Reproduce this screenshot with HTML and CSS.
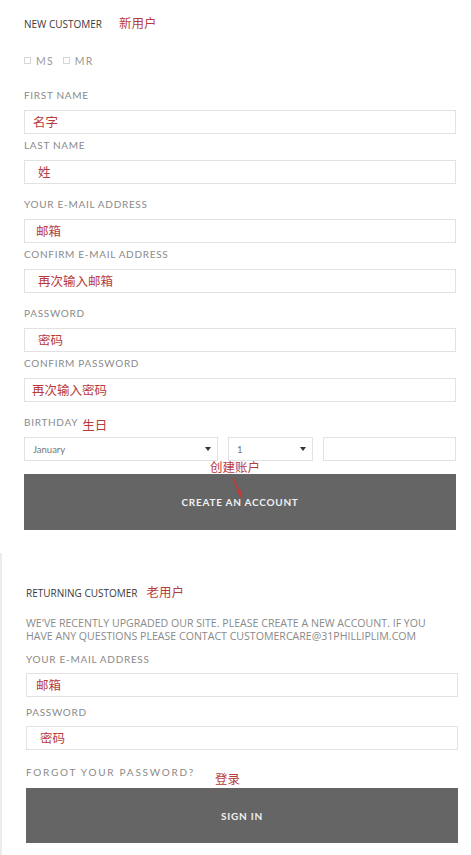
FILE: index.html
```html
<!DOCTYPE html>
<html lang="zh">
<head>
<meta charset="utf-8">
<title>Account</title>
<link rel="stylesheet" href="styles.css">
</head>
<body>
<section class="new">
  <h2 class="title">NEW CUSTOMER <span class="note">新用户</span></h2>
  <div class="gender">
    <span class="chk"><span class="box"></span>MS</span>
    <span class="chk"><span class="box"></span>MR</span>
  </div>

  <div class="group">
    <div class="field">
      <div class="lbl">FIRST NAME</div>
      <div class="input p8"><span class="note">名字</span></div>
    </div>
    <div class="field">
      <div class="lbl">LAST NAME</div>
      <div class="input p13"><span class="note">姓</span></div>
    </div>
  </div>

  <div class="group">
    <div class="field">
      <div class="lbl">YOUR E-MAIL ADDRESS</div>
      <div class="input p11"><span class="note">邮箱</span></div>
    </div>
    <div class="field">
      <div class="lbl">CONFIRM E-MAIL ADDRESS</div>
      <div class="input p13"><span class="note">再次输入邮箱</span></div>
    </div>
  </div>

  <div class="group">
    <div class="field">
      <div class="lbl">PASSWORD</div>
      <div class="input p13"><span class="note">密码</span></div>
    </div>
    <div class="field">
      <div class="lbl">CONFIRM PASSWORD</div>
      <div class="input p7"><span class="note">再次输入密码</span></div>
    </div>
  </div>

  <div class="group">
    <div class="lbl lbl-note">BIRTHDAY <span class="note low">生日</span></div>
    <div class="date-row">
      <div class="select">January<span class="caret"></span></div>
      <div class="select">1<span class="caret"></span></div>
      <div class="input"></div>
    </div>
  </div>

  <div class="btn-wrap">
    <span class="note callout create-note">创建账户</span>
    <svg class="arrow" width="30" height="30" viewBox="0 0 30 30" aria-hidden="true">
      <line x1="9" y1="3" x2="15" y2="17" stroke="#c23a3a" stroke-width="1.8"/>
      <polygon points="12.5,16.5 17.5,15 17,23" fill="#c23a3a"/>
    </svg>
    <button class="btn">CREATE AN ACCOUNT</button>
  </div>
</section>

<section class="returning">
  <h2 class="title gap-sm">RETURNING CUSTOMER <span class="note">老用户</span></h2>
  <p class="info">WE'VE RECENTLY UPGRADED OUR SITE. PLEASE CREATE A NEW ACCOUNT. IF YOU HAVE ANY QUESTIONS PLEASE CONTACT CUSTOMERCARE@31PHILLIPLIM.COM</p>
  <div class="field first">
    <div class="lbl">YOUR E-MAIL ADDRESS</div>
    <div class="input p9"><span class="note">邮箱</span></div>
  </div>
  <div class="field wide">
    <div class="lbl">PASSWORD</div>
    <div class="input p13"><span class="note">密码</span></div>
  </div>
  <div class="forgot">FORGOT YOUR PASSWORD?</div>
  <div class="btn-wrap signin-wrap">
    <span class="note callout login-note">登录</span>
    <button class="btn btn-sm">SIGN IN</button>
  </div>
</section>
</body>
</html>
```

FILE: styles.css
```css
html, body {
  margin: 0;
  padding: 0;
  background: #fff;
}

body {
  font-family: Lato, "Noto Sans CJK SC", sans-serif;
  color: #888;
}

.new {
  padding: 17px 15px 0 24px;
}

.title {
  margin: 0;
  display: flex;
  align-items: center;
  gap: 17px;
  font-family: "Open Sans", "Noto Sans CJK SC", sans-serif;
  font-weight: 400;
  font-size: 10px;
  line-height: 14px;
  height: 14px;
  color: #3a3a3a;
}

.title.gap-sm {
  gap: 9px;
}

.note {
  font-family: "Noto Sans CJK SC", sans-serif;
  font-size: 12.5px;
  line-height: 14px;
  color: #b83b3b;
  letter-spacing: 0;
}

.title .note {
  margin-top: -3px;
}

.gender {
  margin-top: 23px;
  display: flex;
  gap: 9px;
  height: 14px;
  font-size: 10.5px;
  line-height: 14px;
  letter-spacing: 1.2px;
  color: #999;
}

.chk {
  display: flex;
  align-items: center;
  gap: 5px;
}

.box {
  width: 7px;
  height: 7px;
  box-sizing: border-box;
  border: 1px solid #d6d6d6;
  margin-top: -2px;
}

.group {
  margin-top: 13px;
}

.gender + .group {
  margin-top: 20px;
}

.field + .field {
  margin-top: 4px;
}

.lbl {
  font-size: 10px;
  line-height: 14px;
  height: 14px;
  letter-spacing: 0.7px;
  color: #8a8a8a;
  margin-bottom: 8px;
}

.lbl-note {
  display: flex;
  align-items: center;
  gap: 4px;
}

.lbl-note .note {
  margin-top: 5px;
}

.input {
  height: 24px;
  box-sizing: border-box;
  border: 1px solid #e2e2e2;
  display: flex;
  align-items: center;
  padding-left: 8px;
}

.p7 { padding-left: 7px; }
.p8 { padding-left: 8px; }
.p9 { padding-left: 9px; }
.p11 { padding-left: 11px; }
.p13 { padding-left: 13px; }

.date-row {
  display: grid;
  grid-template-columns: 194px 85px 1fr;
  gap: 10px;
}

.select {
  height: 24px;
  box-sizing: border-box;
  border: 1px solid #e2e2e2;
  display: flex;
  align-items: center;
  padding: 0 6px 0 8px;
  font-size: 9.5px;
  color: #777;
}

.caret {
  margin-left: auto;
  width: 0;
  height: 0;
  border-left: 3px solid transparent;
  border-right: 3px solid transparent;
  border-top: 4px solid #333;
}

.btn-wrap {
  position: relative;
  margin-top: 13px;
}

.btn {
  display: block;
  width: 100%;
  height: 56px;
  border: 0;
  margin: 0;
  padding: 0;
  background: #656565;
  color: #f0f0f0;
  font-family: Lato, sans-serif;
  font-weight: 700;
  font-size: 10px;
  letter-spacing: 0.75px;
}

.btn-sm {
  height: 55px;
}

.callout {
  position: absolute;
  z-index: 2;
}

.create-note {
  left: 186px;
  top: -14px;
}

.arrow {
  position: absolute;
  left: 200px;
  top: 1px;
  z-index: 2;
}

.returning {
  margin-top: 23px;
  border-left: 2px solid #ececec;
  padding: 33px 13px 12px 24px;
}

.info {
  margin: 17px 0 0;
  max-width: 412px;
  font-family: "Open Sans", sans-serif;
  font-size: 10.6px;
  line-height: 13px;
  color: #8a8a8a;
}

.field.first {
  margin-top: 9px;
}

.returning .lbl {
  margin-bottom: 7px;
}

.field.wide {
  margin-top: 8px;
}

.forgot {
  margin-top: 15px;
  font-size: 10px;
  line-height: 14px;
  letter-spacing: 1.75px;
  color: #8a8a8a;
}

.signin-wrap {
  margin-top: 9px;
}

.login-note {
  left: 189px;
  top: -16px;
}
```
